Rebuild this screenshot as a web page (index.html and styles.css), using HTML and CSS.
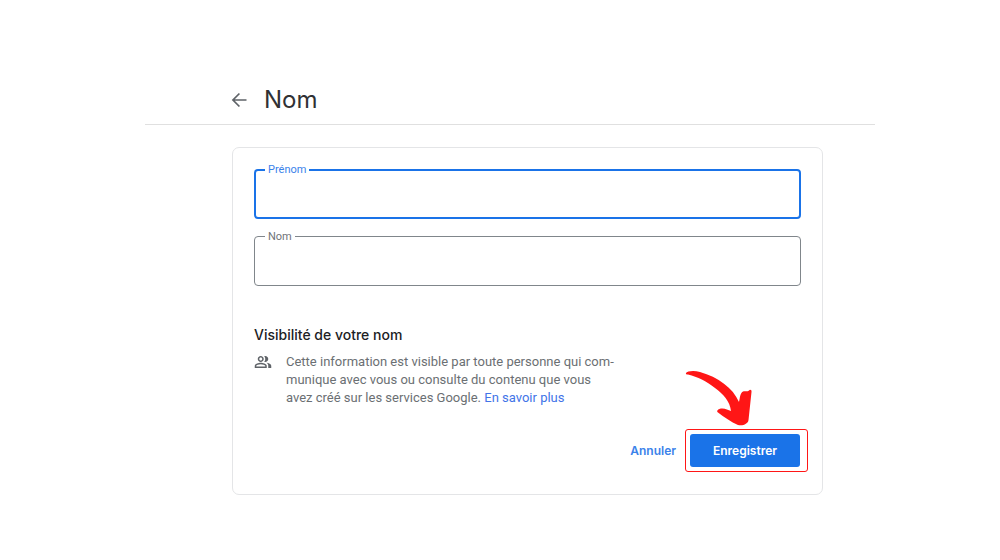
FILE: index.html
```
<!DOCTYPE html>
<html lang="fr">
<head>
    <meta charset="UTF-8">
    <meta name="viewport" content="width=device-width, initial-scale=1.0">
    <title>Nom</title>

    <link rel="stylesheet" href="styles.css">
</head>
<body>
    <header class="header">
        <a href="#" class="back" aria-label="Retour">
            <svg width="20" height="20" viewBox="0 0 24 24"><path d="M21 12H5M12.500 4.200L4.700 12l7.800 7.800" fill="none" stroke="#5f6368" stroke-width="2"/></svg>
        </a>
        <h1>Nom</h1>
    </header>

    <main class="card">
        <form>
            <div class="field active">
                <label for="prenom">Prénom</label>
                <input type="text" id="prenom">
            </div>
            <div class="field">
                <label for="nom">Nom</label>
                <input type="text" id="nom">
            </div>

            <h2>Visibilité de votre nom</h2>
            <div class="info">
                <svg width="18" height="18" viewBox="0 0 24 24" fill="#5f6368"><path d="M9 12c2.210 0 4-1.790 4-4s-1.790-4-4-4-4 1.790-4 4 1.790 4 4 4zm0-6c1.100 0 2 .9 2 2s-.9 2-2 2-2-.9-2-2 .9-2 2-2zm0 7c-2.670 0-8 1.340-8 4v3h16v-3c0-2.660-5.330-4-8-4zm6 5H3v-.99C3.200 16.290 6.300 15 9 15s5.800 1.290 6 2v1zM15 12c2.210 0 4-1.790 4-4s-1.790-4-4-4c-.47 0-.91.1-1.330.24C14.500 5.270 15 6.580 15 8s-.5 2.730-1.330 3.760c.42.14.86.24 1.330.24zM16.670 13.130C18.040 14.060 19 15.320 19 17v3h4v-3c0-2.180-3.580-3.470-6.330-3.870z"/></svg>
                <p>
                    Cette information est visible par toute personne qui com-<br>
                    munique avec vous ou consulte du contenu que vous<br>
                    avez créé sur les services Google. <a href="#">En savoir plus</a>
                </p>
            </div>

            <div class="actions">
                <button type="button" class="cancel">Annuler</button>
                <div class="highlight">
                    <button type="submit" class="save">Enregistrer</button>
                    <svg class="arrow" width="68" height="56" viewBox="0 0 68 56"><path d="M1 3C2 1 9 0 15 2C33 7 48 18 54 32C55 28 55 23 58 21.500C60 20.500 63 22 64 20.500C65 19 67 20 66.500 22L63.500 50C63 54 58 56 53 55C46 52 39 47 33 42.500C31 41 33 39 36 38.500C40 38 43 40 46 41C45 31 38 24 30 18C21 11 13 7 3 4.500C1.500 4.500 .5 4 1 3Z" fill="#ff1616"/></svg>
                </div>
            </div>
        </form>
    </main>
</body>
</html>
```
FILE: styles.css
```
* {
    margin:0;
    padding:0;
    box-sizing:border-box;
}

body {
    padding:76px 125px 24px 145px;
    background:#fff;
    font-family:Roboto, "Liberation Sans", sans-serif;
    color:#202124;
}

a {
    color:#4274e8;
    text-decoration:none;
}

svg {
    display:block;
    flex-shrink:0;
}

.header {
    display:flex;
    align-items:center;
    gap:15px;
    height:49px;
    padding-left:84px;
    border-bottom:1px solid #e0e0e0;
}

.header h1 {
    font-family:Inter, sans-serif;
    font-size:24px;
    font-weight:400;
    line-height:30px;
    color:#303134;
}

.card {
    margin:22px 52px 0 87px;
    padding:21px 21px 22px;
    border:1px solid #e4e5e7;
    border-radius:7px;
}

.field {
    position:relative;
    margin-bottom:17px;
}

.field input {
    display:block;
    width:100%;
    height:50px;
    padding:0 14px;
    border:1px solid #80868b;
    border-radius:4px;
    outline:none;
    font-family:inherit;
    font-size:14px;
}

/* label sits on the top border */
.field label {
    position:absolute;
    top:-7px;
    left:11px;
    padding:0 3px;
    background:#fff;
    font-size:11px;
    line-height:15px;
    color:#6f7377;
}

.field.active input {
    border:2px solid #1a73e8;
}

.field.active label {
    color:#3b82ea;
}

h2 {
    margin-top:40px;
    font-family:Inter, sans-serif;
    font-size:14px;
    font-weight:500;
    line-height:18px;
}

.info {
    display:flex;
    gap:14px;
    margin-top:9px;
}

.info p {
    font-size:13px;
    line-height:18px;
    color:#6b6f73;
}

.actions {
    display:flex;
    justify-content:flex-end;
    align-items:center;
    gap:9px;
    margin:22px -7px 0 0;
}

button {
    border:none;
    border-radius:3px;
    font-family:Inter, sans-serif;
    font-size:12px;
    font-weight:600;
    cursor:pointer;
}

.cancel {
    background:none;
    color:#3b82ea;
}

.highlight {
    position:relative;
    padding:4px 7px 4px 4px;
    border:1px solid #ff1616;
    border-radius:3px;
}

.save {
    display:block;
    width:110px;
    height:33px;
    background:#1a73e8;
    color:#fff;
}

.arrow {
    position:absolute;
    bottom:45px;
    left:-1px;
}
```
